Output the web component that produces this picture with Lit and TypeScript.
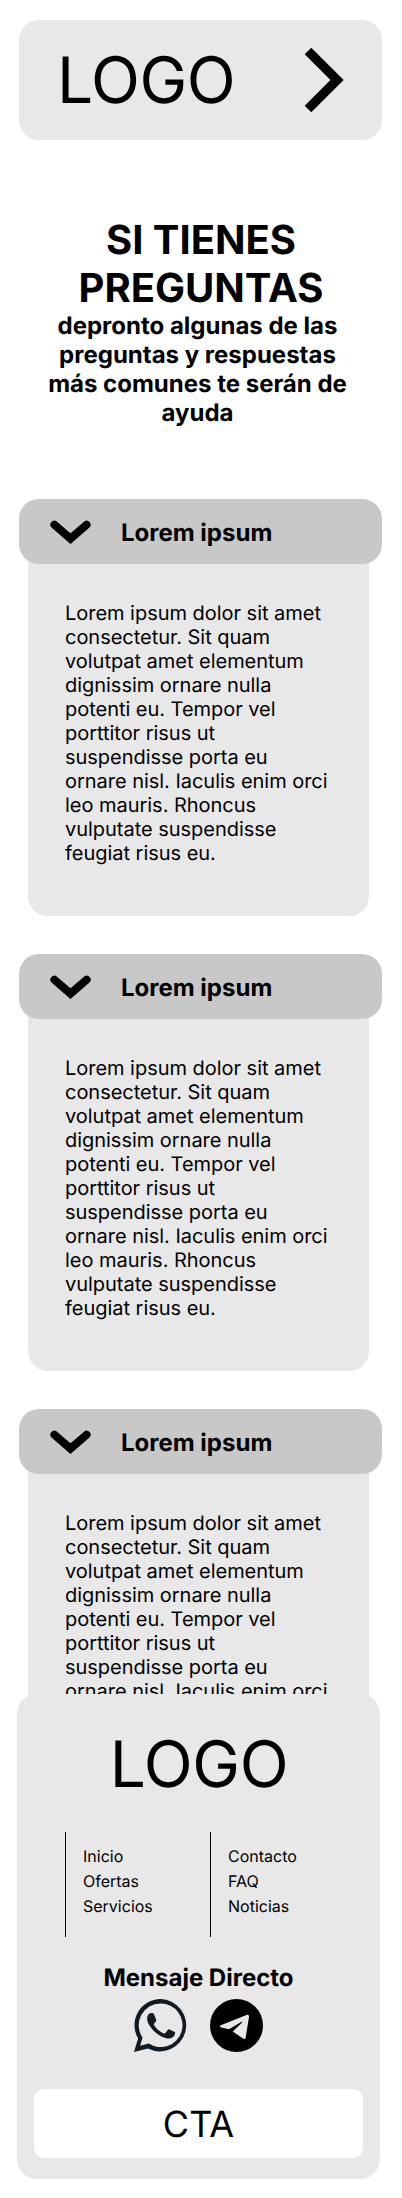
import { LitElement, html, css } from "lit";
import { customElement, property } from "lit/decorators.js";

const ANSWER =
  "Lorem ipsum dolor sit amet consectetur. Sit quam volutpat amet elementum dignissim ornare nulla potenti eu. Tempor vel porttitor risus ut suspendisse porta eu ornare nisl. Iaculis enim orci leo mauris. Rhoncus vulputate suspendisse feugiat risus eu.";

@customElement("faq-item")
class FaqItem extends LitElement {
  @property() heading = "";
  @property() text = "";

  static styles = css`
    :host { display: block; }
    .head {
      position: relative;
      z-index: 1;
      box-sizing: border-box;
      height: 65px;
      border-radius: 20px;
      background: #c8c8c8;
      display: flex;
      align-items: center;
      padding-left: 31px;
      gap: 30px;
    }
    .chevron { display: block; flex: none; width: 41px; height: 24px; overflow: visible; }
    .title { margin: 0; padding-top: 2px; font-size: 24px; line-height: 29px; font-weight: 700; }
    .body {
      box-sizing: border-box;
      width: 341px;
      height: 372px;
      margin: -20px 0 0 9px;
      padding: 57px 36px 0 37px;
      border-radius: 0 0 20px 20px;
      background: #e8e8e8;
    }
    .text { margin: 0; font-size: 20px; line-height: 24px; letter-spacing: -0.03px; }
  `;

  render() {
    return html`
      <div class="head">
        <svg class="chevron" viewBox="0 0 41 24" fill="none" stroke="#000" stroke-width="8" stroke-linecap="round">
          <path d="M4.400 4.700 20.500 18.600 36.600 4.700" />
        </svg>
        <h2 class="title">${this.heading}</h2>
      </div>
      <div class="body"><p class="text">${this.text}</p></div>
    `;
  }
}

@customElement("app-root")
class AppRoot extends LitElement {
  static styles = css`
    :host {
      display: block;
      box-sizing: border-box;
      width: 402px;
      height: 2198px;
      padding-top: 20px;
      background: #fff;
      color: #000;
      font-family: Inter, sans-serif;
      text-rendering: geometricPrecision;
    }
    .header {
      box-sizing: border-box;
      width: 363px;
      height: 120px;
      margin-left: 19px;
      padding: 0 38px;
      border-radius: 20px;
      background: #e8e8e8;
      display: flex;
      align-items: center;
      justify-content: space-between;
    }
    .logo { font-size: 64px; line-height: 77px; letter-spacing: -0.4px; }
    .arrow { display: block; width: 40px; height: 66px; }
    .intro { margin-top: 76px; text-align: center; font-weight: 700; }
    .intro-title { margin: 0; font-size: 40px; line-height: 48px; font-weight: 700; }
    .intro-text { margin: -1px auto 0; width: 310px; padding-right: 7px; font-size: 24px; line-height: 29px; }
    .faq { margin: 72px 20px 0 19px; display: grid; gap: 38px; }
    .footer {
      position: relative;
      z-index: 2;
      box-sizing: border-box;
      width: 363px;
      height: 485px;
      margin: -132px 0 0 17px;
      padding: 32px 17px 21px;
      border-radius: 20px;
      background: #e8e8e8;
      display: flex;
      flex-direction: column;
    }
    .footer .logo { padding-left: 1px; text-align: center; }
    .links { display: flex; margin: 29px 0 0 31px; }
    .col {
      box-sizing: border-box;
      width: 145px;
      height: 105px;
      margin: 0;
      padding: 12px 0 0 17px;
      border-left: 1px solid #000;
      list-style: none;
      font-size: 16px;
      line-height: 25px;
    }
    .direct { margin: 26px 0 0; text-align: center; font-size: 24px; line-height: 29px; font-weight: 700; }
    .social { display: flex; justify-content: center; gap: 23px; margin-top: 7px; }
    .social svg { display: block; width: 53px; height: 53px; }
    .cta {
      margin: auto 0 0;
      height: 69px;
      padding: 0;
      border: 0;
      border-radius: 10px;
      background: #fff;
      color: #000;
      font: 400 36px/44px Inter, sans-serif;
      text-rendering: geometricPrecision;
    }
  `;

  render() {
    return html`
      <header class="header">
        <span class="logo">LOGO</span>
        <svg class="arrow" viewBox="0 0 40 66">
          <path d="M7.3.7 39.7 33 7.3 65.3.7 58.7 26.4 33 .7 7.3z" />
        </svg>
      </header>
      <section class="intro">
        <h1 class="intro-title">SI TIENES<br />PREGUNTAS</h1>
        <p class="intro-text">depronto algunas de las preguntas y respuestas más comunes te serán de ayuda</p>
      </section>
      <section class="faq">
        ${[0, 1, 2].map(() => html`<faq-item heading="Lorem ipsum" text=${ANSWER}></faq-item>`)}
      </section>
      <footer class="footer">
        <span class="logo">LOGO</span>
        <nav class="links">
          <ul class="col"><li>Inicio</li><li>Ofertas</li><li>Servicios</li></ul>
          <ul class="col"><li>Contacto</li><li>FAQ</li><li>Noticias</li></ul>
        </nav>
        <h2 class="direct">Mensaje Directo</h2>
        <div class="social">
          <svg viewBox="0 0 53 53" fill="#111b21">
            <path fill-rule="evenodd" d="M26.700 0A26.200 26.200 0 0 0 4.100 39.500L0 53 14 49.500A26.200 26.200 0 1 0 26.700 0zM26.700 4.500A21.800 21.800 0 1 1 14.700 44.500L6.200 46.700 8.500 38.600A21.800 21.800 0 0 1 26.700 4.500z" />
            <path d="M15.400 14.600c.9-.6 2.700-.8 3.700-.3.600.3.900 1 1.200 1.700l1.900 4.700c.2.600.1 1.100-.2 1.600-.6 1-1.300 1.600-1.900 2.300-.4.500-.4.900-.1 1.500 2.500 4 5.300 6.500 9.700 8.300.7.300 1.200.2 1.600-.3l2.500-3.100c.5-.7 1.100-.8 1.800-.5l4.700 2.300c.7.300.9.700.8 1.500-.2 2.700-2.200 4.300-4.500 4.900-2.500.6-5 .1-8.600-1.500-6.200-2.700-10.800-8.200-13.400-12.700-2.200-4.200-1.900-8.100.8-10.400z" />
          </svg>
          <svg viewBox="0 0 53 53">
            <circle cx="26.500" cy="26.500" r="26.500" />
            <path fill="#e8e8e8" d="M10.800 26.200 36.600 16c1.400-.5 2.600.2 2.400 2L35.700 38.400c-.3 1.700-1.500 1.900-2.700 1.100l-10.200-6.900 9.300-9.100c.6-.7-.1-1-.9-.5L18.900 30.200 11.400 28.500c-1.600-.5-2-1.600-.6-2.300z" />
          </svg>
        </div>
        <button class="cta">CTA</button>
      </footer>
    `;
  }
}
